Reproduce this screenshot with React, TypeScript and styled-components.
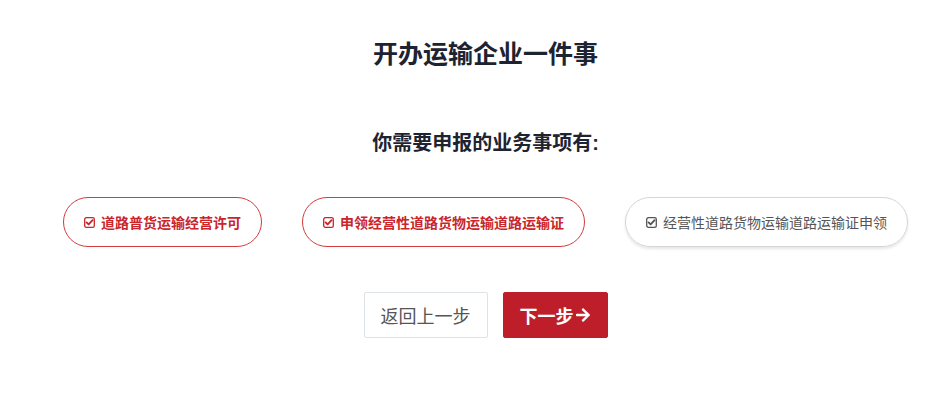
import styled, { createGlobalStyle } from 'styled-components'
import { FaArrowRight } from 'react-icons/fa'

const GlobalStyle = createGlobalStyle`
  body {
    margin: 0;
    background: #fff;
    font-family: "Liberation Sans", "Noto Sans CJK SC", sans-serif;
  }
`

const Page = styled.div`
  padding: 36px 0 60px 23px;
  display: flex;
  flex-direction: column;
  align-items: center;
`

const Title = styled.h1`
  margin: 0;
  font-size: 25px;
  line-height: 36px;
  font-weight: 700;
  color: #1d2330;
`

const SubTitle = styled.h2`
  margin: 56px 0 0;
  font-size: 20px;
  line-height: 30px;
  font-weight: 700;
  color: #1d2330;
`

const ItemRow = styled.div`
  margin-top: 39px;
  display: flex;
  gap: 40px;
`

const Item = styled.div<{ $active: boolean }>`
  height: 50px;
  box-sizing: border-box;
  padding: 0 20px;
  display: flex;
  align-items: center;
  gap: 6px;
  border-radius: 25px;
  font-size: 14px;
  white-space: nowrap;
  border: 1px solid ${(p) => (p.$active ? '#d43b3b' : '#d6d6d6')};
  color: ${(p) => (p.$active ? '#c9252b' : '#555')};
  font-weight: ${(p) => (p.$active ? 700 : 400)};
  box-shadow: ${(p) => (p.$active ? 'none' : '0 2px 3px rgba(0,0,0,0.1)')};
`

const Actions = styled.div`
  margin-top: 45px;
  display: flex;
  gap: 15px;
`

const Button = styled.button<{ $primary?: boolean }>`
  height: 46px;
  box-sizing: border-box;
  padding: 0 16px;
  display: flex;
  align-items: center;
  gap: 1px;
  font-family: inherit;
  font-size: 18px;
  border-radius: 2px;
  cursor: pointer;
  border: 1px solid ${(p) => (p.$primary ? '#be1e2a' : '#dde3e6')};
  background: ${(p) => (p.$primary ? '#be1e2a' : '#fff')};
  color: ${(p) => (p.$primary ? '#fff' : '#555')};
  font-weight: ${(p) => (p.$primary ? 700 : 400)};
  svg {
    font-size: 16px;
  }
`

// square box with a heavy tick, like the old fa-check-square-o
const CheckIcon = () => (
  <svg width="11" height="11" viewBox="0 0 11 11" fill="none">
    <rect x="0.7" y="0.7" width="9.6" height="9.6" rx="1.6" stroke="currentColor" strokeWidth="1.3" />
    <path d="M2.6 5.4 L4.6 7.4 L8.6 3.2" stroke="currentColor" strokeWidth="1.9" strokeLinecap="round" strokeLinejoin="round" />
  </svg>
)

const items = [
  { label: '道路普货运输经营许可', active: true },
  { label: '申领经营性道路货物运输道路运输证', active: true },
  { label: '经营性道路货物运输道路运输证申领', active: false },
]

const App = () => {
  return (
    <>
      <GlobalStyle />
      <Page>
        <Title>开办运输企业一件事</Title>
        <SubTitle>你需要申报的业务事项有:</SubTitle>
        <ItemRow>
          {items.map((it) => (
            <Item key={it.label} $active={it.active}>
              <CheckIcon />
              {it.label}
            </Item>
          ))}
        </ItemRow>
        <Actions>
          <Button>返回上一步</Button>
          <Button $primary>
            下一步
            <FaArrowRight />
          </Button>
        </Actions>
      </Page>
    </>
  )
}

export default App
